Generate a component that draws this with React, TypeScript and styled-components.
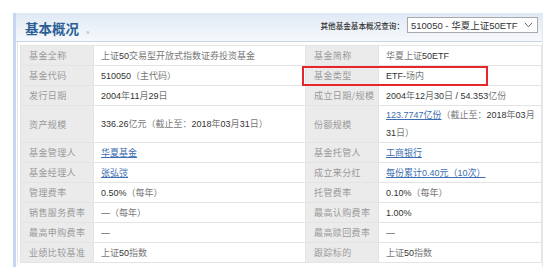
import React from "react";
import styled, { createGlobalStyle } from "styled-components";

const Global = createGlobalStyle`
  html, body { margin: 0; padding: 0; background: #ffffff; }
  body { font-family: "Liberation Sans", "Noto Sans CJK SC", sans-serif; }
`;

const Page = styled.div`
  padding: 13px 7px 0 13px;
  width: 550px;
  height: 276px;
  box-sizing: border-box;
`;

const Panel = styled.div`
  width: 530px;
  border-left: 3px solid #c4d7ec;
  border-right: 1px solid #e3e8ee;
  box-sizing: border-box;
  padding-bottom: 2px;
`;

const Header = styled.div`
  height: 29px;
  display: flex;
  align-items: center;
  justify-content: space-between;
  padding: 0 4px 0 9px;
  background: linear-gradient(to bottom, #dfe9f5 0%, #eef3f9 60%, #f6f9fc 100%);
  border-bottom: 1px solid #c8d6e5;
  box-sizing: border-box;
`;

const Title = styled.div`
  display: flex;
  align-items: baseline;
  gap: 7px;
  font-family: "Noto Sans CJK SC", sans-serif;
  font-size: 13.5px;
  font-weight: 700;
  color: #2c5f95;
  margin-top: 1px;
`;

const TitleMark = styled.span`
  font-size: 7px;
  font-weight: 400;
  color: #9aa4ae;
`;

const Query = styled.div`
  display: flex;
  align-items: center;
  gap: 3px;
  margin-top: -4px;
`;

const QueryLabel = styled.span`
  font-family: "Noto Sans CJK SC", sans-serif;
  font-size: 7.6px;
  font-weight: 500;
  color: #333;
`;

const Select = styled.div`
  width: 131px;
  height: 16px;
  border: 1px solid #a9a9a9;
  background: #fff;
  display: flex;
  align-items: center;
  justify-content: space-between;
  padding: 0 4px 0 3px;
  box-sizing: border-box;
  font-size: 9.5px;
  color: #333;
`;

const Body = styled.div`
  position: relative;
  padding: 3px 1px 2px 2px;
  border-left: 1px solid #e6e6e6;
  margin-left: 1px;
`;

const Table = styled.table`
  border-collapse: collapse;
  width: 521px;
  table-layout: fixed;
  font-size: 9px;
  border: 1px solid #e2e2e2;
`;

const Row = styled.tr<{ $tall?: boolean }>`
  height: ${(p) => (p.$tall ? "37px" : "20px")};
`;

const LabelCell = styled.td`
  background: #ebebeb;
  color: #9a9a9a;
  font-family: "Noto Sans CJK SC", sans-serif;
  font-size: 9px;
  padding: 0 0 0 8px;
  border: 1px solid #e4e4e4;
  letter-spacing: 0.4px;
  white-space: nowrap;
`;

const ValueCell = styled.td`
  background: #fff;
  color: #333;
  padding: 0 6px 0 7px;
  border: 1px solid #e4e4e4;
  line-height: 18px;
  vertical-align: middle;
`;

const Cjk = styled.span`
  color: #777;
`;

const Link = styled.a`
  color: #3b6db0;
  text-decoration: underline;
  cursor: pointer;
`;

const Highlight = styled.div`
  position: absolute;
  left: 284px;
  top: 24px;
  width: 186px;
  height: 20px;
  border: 2px solid #e8262a;
  box-sizing: border-box;
  pointer-events: none;
`;

const Chevron = () => (
  <svg width="9" height="6" viewBox="0 0 9 6">
    <path d="M0.8 0.8 L4.5 4.8 L8.2 0.8" fill="none" stroke="#666" strokeWidth="1" />
  </svg>
);

export default function App() {
  return (
    <>
      <Global />
      <Page>
        <Panel>
          <Header>
            <Title>
              基本概况
              <TitleMark>»</TitleMark>
            </Title>
            <Query>
              <QueryLabel>其他基金基本概况查询：</QueryLabel>
              <Select>
                <span>510050 - 华夏上证50ETF</span>
                <Chevron />
              </Select>
            </Query>
          </Header>
          <Body>
            <Table>
              <colgroup>
                <col style={{ width: 73 }} />
                <col style={{ width: 212 }} />
                <col style={{ width: 73 }} />
                <col style={{ width: 163 }} />
              </colgroup>
              <tbody>
                <Row>
                  <LabelCell>基金全称</LabelCell>
                  <ValueCell><Cjk>上证</Cjk>50<Cjk>交易型开放式指数证券投资基金</Cjk></ValueCell>
                  <LabelCell>基金简称</LabelCell>
                  <ValueCell><Cjk>华夏上证</Cjk>50ETF</ValueCell>
                </Row>
                <Row>
                  <LabelCell>基金代码</LabelCell>
                  <ValueCell>510050<Cjk>（主代码）</Cjk></ValueCell>
                  <LabelCell>基金类型</LabelCell>
                  <ValueCell>ETF-<Cjk>场内</Cjk></ValueCell>
                </Row>
                <Row>
                  <LabelCell>发行日期</LabelCell>
                  <ValueCell>2004<Cjk>年</Cjk>11<Cjk>月</Cjk>29<Cjk>日</Cjk></ValueCell>
                  <LabelCell>成立日期/规模</LabelCell>
                  <ValueCell>2004<Cjk>年</Cjk>12<Cjk>月</Cjk>30<Cjk>日</Cjk> / 54.353<Cjk>亿份</Cjk></ValueCell>
                </Row>
                <Row $tall>
                  <LabelCell>资产规模</LabelCell>
                  <ValueCell>336.26<Cjk>亿元（截止至：</Cjk>2018<Cjk>年</Cjk>03<Cjk>月</Cjk>31<Cjk>日）</Cjk></ValueCell>
                  <LabelCell>份额规模</LabelCell>
                  <ValueCell><Link>123.7747亿份</Link><Cjk>（截止至：</Cjk>2018<Cjk>年</Cjk>03<Cjk>月</Cjk> 31<Cjk>日）</Cjk></ValueCell>
                </Row>
                <Row>
                  <LabelCell>基金管理人</LabelCell>
                  <ValueCell><Link>华夏基金</Link></ValueCell>
                  <LabelCell>基金托管人</LabelCell>
                  <ValueCell><Link>工商银行</Link></ValueCell>
                </Row>
                <Row>
                  <LabelCell>基金经理人</LabelCell>
                  <ValueCell><Link>张弘弢</Link></ValueCell>
                  <LabelCell>成立来分红</LabelCell>
                  <ValueCell><Link>每份累计0.40元（10次）</Link></ValueCell>
                </Row>
                <Row>
                  <LabelCell>管理费率</LabelCell>
                  <ValueCell>0.50%<Cjk>（每年）</Cjk></ValueCell>
                  <LabelCell>托管费率</LabelCell>
                  <ValueCell>0.10%<Cjk>（每年）</Cjk></ValueCell>
                </Row>
                <Row>
                  <LabelCell>销售服务费率</LabelCell>
                  <ValueCell>—<Cjk>（每年）</Cjk></ValueCell>
                  <LabelCell>最高认购费率</LabelCell>
                  <ValueCell>1.00%</ValueCell>
                </Row>
                <Row>
                  <LabelCell>最高申购费率</LabelCell>
                  <ValueCell>—</ValueCell>
                  <LabelCell>最高赎回费率</LabelCell>
                  <ValueCell>—</ValueCell>
                </Row>
                <Row>
                  <LabelCell>业绩比较基准</LabelCell>
                  <ValueCell><Cjk>上证</Cjk>50<Cjk>指数</Cjk></ValueCell>
                  <LabelCell>跟踪标的</LabelCell>
                  <ValueCell><Cjk>上证</Cjk>50<Cjk>指数</Cjk></ValueCell>
                </Row>
              </tbody>
            </Table>
            <Highlight />
          </Body>
        </Panel>
      </Page>
    </>
  );
}
